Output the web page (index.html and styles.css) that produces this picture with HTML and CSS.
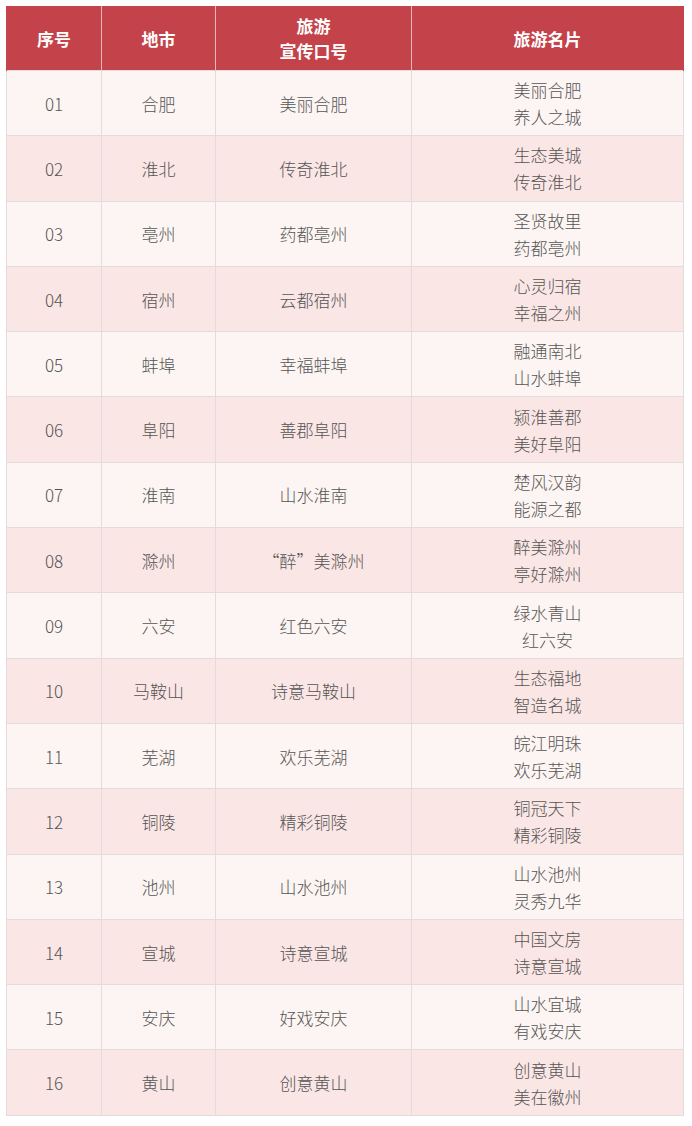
FILE: index.html
```html
<!DOCTYPE html>
<html lang="zh-CN">
<head>
<meta charset="utf-8">
<title>安徽旅游宣传口号</title>
<link rel="stylesheet" href="styles.css">
</head>
<body>
<table class="tour">
  <colgroup>
    <col class="c-no"><col class="c-city"><col class="c-slogan"><col class="c-card">
  </colgroup>
  <thead>
    <tr><th>序号</th><th>地市</th><th>旅游<br>宣传口号</th><th>旅游名片</th></tr>
  </thead>
  <tbody>
    <tr><td>01</td><td>合肥</td><td>美丽合肥</td><td>美丽合肥<br>养人之城</td></tr>
    <tr><td>02</td><td>淮北</td><td>传奇淮北</td><td>生态美城<br>传奇淮北</td></tr>
    <tr><td>03</td><td>亳州</td><td>药都亳州</td><td>圣贤故里<br>药都亳州</td></tr>
    <tr><td>04</td><td>宿州</td><td>云都宿州</td><td>心灵归宿<br>幸福之州</td></tr>
    <tr><td>05</td><td>蚌埠</td><td>幸福蚌埠</td><td>融通南北<br>山水蚌埠</td></tr>
    <tr><td>06</td><td>阜阳</td><td>善郡阜阳</td><td>颍淮善郡<br>美好阜阳</td></tr>
    <tr><td>07</td><td>淮南</td><td>山水淮南</td><td>楚风汉韵<br>能源之都</td></tr>
    <tr><td>08</td><td>滁州</td><td>“醉”美滁州</td><td>醉美滁州<br>亭好滁州</td></tr>
    <tr><td>09</td><td>六安</td><td>红色六安</td><td>绿水青山<br>红六安</td></tr>
    <tr><td>10</td><td>马鞍山</td><td>诗意马鞍山</td><td>生态福地<br>智造名城</td></tr>
    <tr><td>11</td><td>芜湖</td><td>欢乐芜湖</td><td>皖江明珠<br>欢乐芜湖</td></tr>
    <tr><td>12</td><td>铜陵</td><td>精彩铜陵</td><td>铜冠天下<br>精彩铜陵</td></tr>
    <tr><td>13</td><td>池州</td><td>山水池州</td><td>山水池州<br>灵秀九华</td></tr>
    <tr><td>14</td><td>宣城</td><td>诗意宣城</td><td>中国文房<br>诗意宣城</td></tr>
    <tr><td>15</td><td>安庆</td><td>好戏安庆</td><td>山水宜城<br>有戏安庆</td></tr>
    <tr><td>16</td><td>黄山</td><td>创意黄山</td><td>创意黄山<br>美在徽州</td></tr>
  </tbody>
</table>
</body>
</html>
```

FILE: styles.css
```css
html, body {
  margin: 0;
  padding: 0;
  background: #ffffff;
}

body {
  padding: 6px 0 0 6px;
  font-family: "Noto Sans CJK SC", "Noto Sans", sans-serif;
}

.tour {
  border-collapse: collapse;
  table-layout: fixed;
  width: 677px;
}

.c-no { width: 95px; }
.c-city { width: 114px; }
.c-slogan { width: 196px; }
.c-card { width: 272px; }

.tour th {
  background: #c4434a;
  color: #ffffff;
  font-weight: 700;
  font-size: 17px;
  line-height: 25px;
  height: 64px;
  padding: 0;
  text-align: center;
  vertical-align: middle;
  border-left: 1px solid #e9b7b9;
  border-right: 1px solid #e9b7b9;
}

.tour th:first-child { border-left: 1px solid #c4434a; }
.tour th:last-child { border-right: 1px solid #c4434a; }

.tour td {
  height: 64.3px;
  padding: 0;
  text-align: center;
  vertical-align: middle;
  color: #555555;
  font-size: 17px;
  font-weight: 300;
  line-height: 27px;
  border: 1px solid #e2dcdc;
}

.tour tbody tr:nth-child(odd) td { background: #fdf5f3; }
.tour tbody tr:nth-child(even) td { background: #fbe6e6; }
```
